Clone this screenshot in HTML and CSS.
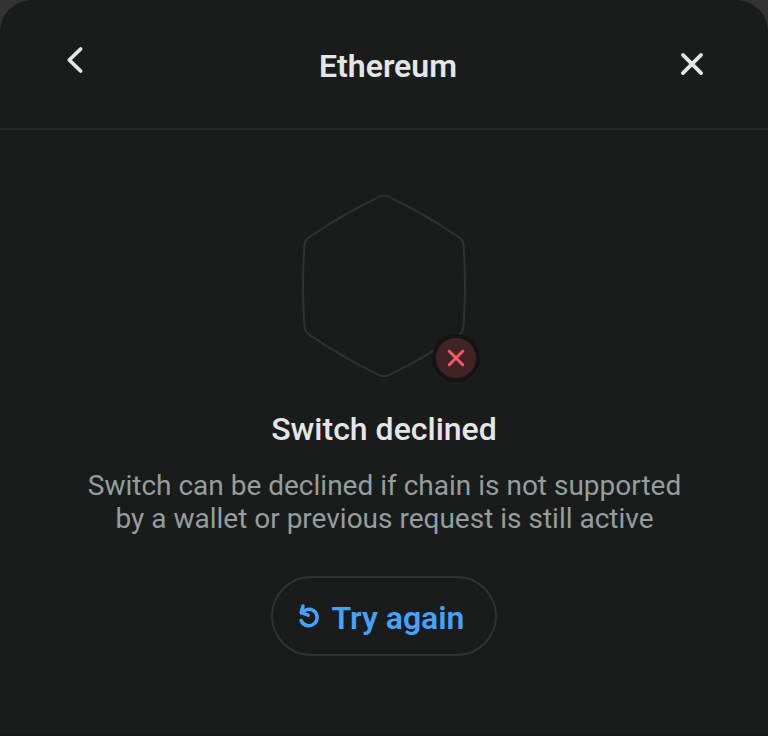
FILE: index.html
```html
<!DOCTYPE html>
<html lang="en">
<head>
<meta charset="utf-8">
<title>Ethereum</title>
<link rel="stylesheet" href="styles.css">
</head>
<body>
<main class="modal">
  <header class="header">
    <button class="icon-button back" aria-label="Back">
      <svg width="32" height="32" viewBox="0 0 32 32"><path d="M20.600 5 9.300 16l11.300 11"/></svg>
    </button>
    <h1 class="heading">Ethereum</h1>
    <button class="icon-button" aria-label="Close">
      <svg width="32" height="32" viewBox="0 0 32 32"><path d="m6.900 6.900 18.200 18.200M25.100 6.900 6.900 25.100"/></svg>
    </button>
  </header>
  <section class="content">
    <div class="network">
      <svg class="hexagon" width="168" height="184" viewBox="0 0 168 184"><path d="M79.500 2.700Q84 .7 88.500 2.700Q128 22 159 43.500Q163.200 46.600 163.500 51Q166.500 92 163.500 132Q163.200 137.400 159 140.500Q128 162 88.500 181.300Q84 183.300 79.500 181.300Q40 162 9 140.500Q4.800 137.400 4.500 132Q1.500 92 4.500 51Q4.800 46.600 9 43.500Q40 22 79.500 2.700Z"/></svg>
      <span class="badge">
        <svg width="24" height="24" viewBox="0 0 24 24"><path d="m5.300 5.300 13.400 13.400M18.700 5.300 5.300 18.700"/></svg>
      </span>
    </div>
    <h2 class="status">Switch declined</h2>
    <p class="description">Switch can be declined if chain is not supported<br>by a wallet or previous request is still active</p>
    <button class="retry">
      <svg width="24" height="26" viewBox="0 0 24 26"><path d="M6 3 4.100 9.700 11.200 12.200M4.500 9.900C7.500 6.300 12.500 5.500 16 7.300A8.300 8.300 0 1 1 4.100 17.500"/></svg>
      <span>Try again</span>
    </button>
  </section>
</main>
</body>
</html>
```
FILE: styles.css
```css
* {
  box-sizing: border-box;
}

body {
  margin: 0;
  background: #323232;
  font-family: Roboto, "Liberation Sans", sans-serif;
  color: #e4e7e7;
}

button {
  padding: 0;
  border: 0;
  background: none;
  font: inherit;
  color: inherit;
}

svg {
  display: block;
  fill: none;
  stroke: currentColor;
  stroke-width: 3.8;
  stroke-linecap: round;
  stroke-linejoin: round;
}

.modal {
  height: 736px;
  border-radius: 32px 32px 0 0;
  border-bottom: 2px solid #181818;
  background: #1a1c1b;
}

.header {
  display: flex;
  align-items: center;
  justify-content: space-between;
  height: 130px;
  padding: 0 60px;
  border-bottom: 2px solid #272928;
}

.icon-button {
  width: 32px;
  height: 32px;
}

.back {
  margin-bottom: 8px;
}

.heading,
.status {
  margin: 0;
  font-size: 32px;
  font-weight: 600;
  line-height: 40px;
}

.heading {
  padding: 4px 0 0 8px;
}

.content {
  display: flex;
  flex-direction: column;
  align-items: center;
  padding-top: 64px;
}

.network {
  position: relative;
  width: 168px;
  height: 184px;
}

.hexagon {
  stroke: #313332;
  stroke-width: 2;
}

.badge {
  position: absolute;
  right: -12px;
  bottom: -4px;
  display: grid;
  place-items: center;
  width: 48px;
  height: 48px;
  border: 4px solid #141414;
  border-radius: 50%;
  background: #412326;
  color: #f25a67;
}

.badge svg {
  stroke-width: 3;
}

.status {
  margin-top: 31px;
  font-weight: 500;
}

.description {
  margin: 20px 0 0;
  padding-left: 1px;
  font-size: 28px;
  line-height: 33px;
  text-align: center;
  color: #949e9e;
}

.retry {
  display: flex;
  align-items: center;
  justify-content: center;
  gap: 11px;
  width: 226px;
  height: 80px;
  margin-top: 41px;
  padding-right: 7px;
  border: 2px solid #313332;
  border-radius: 40px;
  font-size: 32px;
  font-weight: 600;
  color: #47a1ff;
}

.retry svg {
  stroke-width: 3.5;
}

.retry span {
  padding-top: 4px;
}
```
